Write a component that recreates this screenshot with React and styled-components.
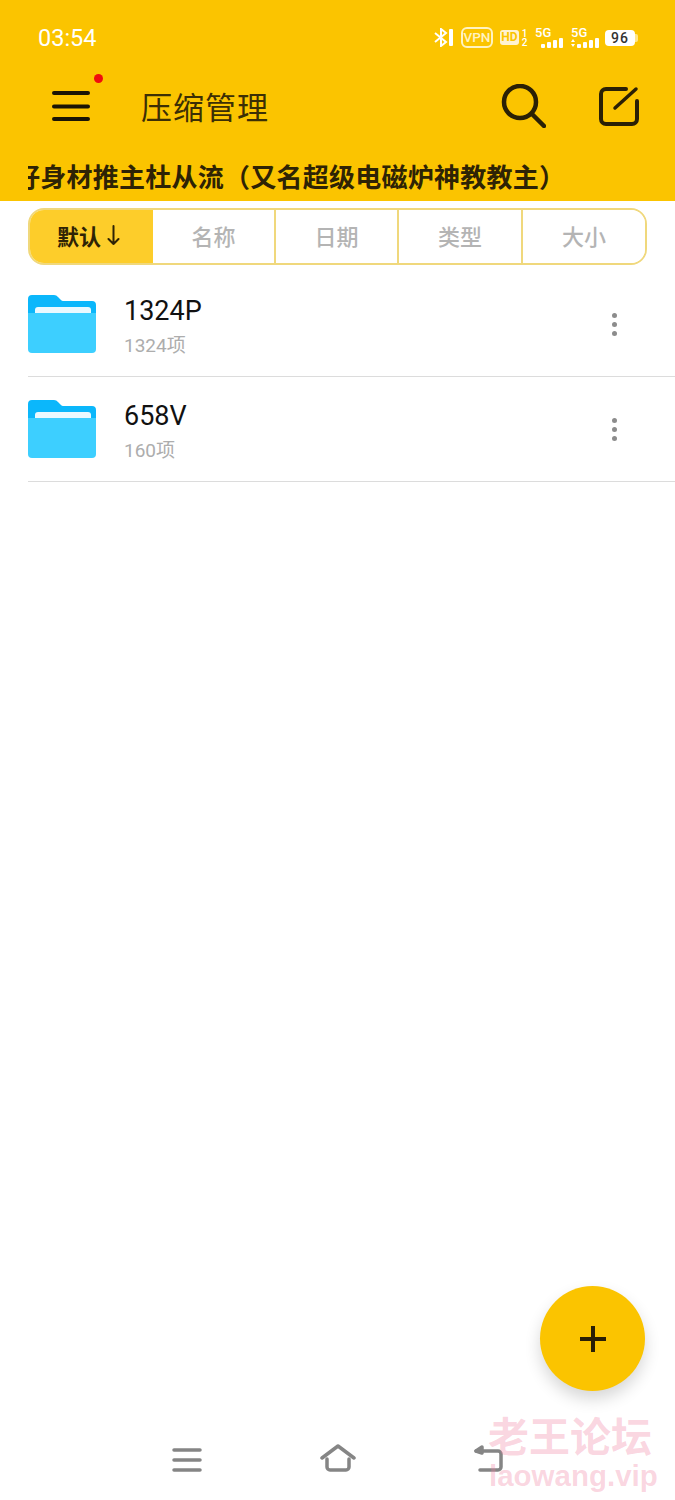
import React from "react";
import styled, { createGlobalStyle } from "styled-components";

const GlobalStyle = createGlobalStyle`
  * { box-sizing: border-box; }
  html, body { margin: 0; padding: 0; background: #fff; }
  body { font-family: "Roboto", "Noto Sans CJK SC", sans-serif; }
`;

const Page = styled.div`
  position: relative;
  width: 675px;
  height: 1500px;
  overflow: hidden;
  display: flex;
  flex-direction: column;
  background: #fff;
`;
const Header = styled.header`
  background: #fbc400;
  height: 201px;
  flex-shrink: 0;
`;
const StatusBar = styled.div`
  height: 75px;
  padding: 0 37px 0 38px;
  display: flex;
  align-items: center;
  justify-content: space-between;
`;
const Time = styled.span`
  color: #fff;
  font-size: 23.5px;
  line-height: 26px;
`;
const StatusIcons = styled.div`
  display: flex;
  align-items: center;
  color: #fff;
`;
const Vpn = styled.span`
  width: 32px;
  height: 21px;
  margin-left: 7px;
  border: 2px solid #fff3c0;
  border-radius: 6px;
  font-size: 13.5px;
  font-weight: 500;
  line-height: 17px;
  text-align: center;
  color: #fff3c0;
`;
const Hd = styled.span`
  width: 19px;
  height: 15px;
  margin-left: 7px;
  border-radius: 3px;
  background: #fff3d0;
  color: #fbc400;
  font-size: 12px;
  font-weight: 700;
  line-height: 15px;
  text-align: center;
`;
const SimNums = styled.span`
  width: 7px;
  margin: 0 0 0 2px;
  font-size: 10px;
  font-weight: 500;
  line-height: 9px;
  text-align: center;
`;
const Signal = styled.div`
  position: relative;
  width: 28px;
  height: 20px;
  margin-left: ${p => p.$gap}px;
`;
const SignalLabel = styled.span`
  position: absolute;
  left: 0;
  top: -2px;
  font-size: 13px;
  line-height: 13px;
  font-weight: 500;
`;
const Battery = styled.span`
  width: 30px;
  height: 16px;
  margin-left: 6px;
  border-radius: 4px;
  background: #fff;
  color: #333;
  font-size: 14px;
  font-weight: 500;
  letter-spacing: 1px;
  line-height: 16px;
  text-align: center;
`;
const BatteryCap = styled.span`
  width: 3px;
  height: 8px;
  border-radius: 0 2px 2px 0;
  background: #ffe68a;
`;
const Toolbar = styled.div`
  height: 62px;
  padding: 0 36px 0 52px;
  display: flex;
  align-items: center;
`;
const MenuButton = styled.div`
  position: relative;
  width: 38px;
  height: 30px;
`;
const RedDot = styled.span`
  position: absolute;
  left: 42px;
  top: -17px;
  width: 9px;
  height: 9px;
  border-radius: 50%;
  background: #f00d0d;
`;
const Title = styled.h1`
  flex: 1;
  margin: 0 0 0 51px;
  color: #3c2f05;
  font-size: 31px;
  font-weight: 400;
  line-height: 40px;
  letter-spacing: 1px;
  font-family: "Noto Sans CJK SC", sans-serif;
`;
const Actions = styled.div`
  display: flex;
  align-items: center;
  gap: 52px;
`;
const Marquee = styled.div`
  margin: 22px 0 0 28px;
  width: 620px;
  height: 36px;
  overflow: hidden;
`;
const MarqueeText = styled.div`
  margin-left: -14px;
  color: #2e2305;
  font-family: "Noto Sans CJK SC", sans-serif;
  font-size: 26px;
  font-weight: 700;
  line-height: 34px;
  letter-spacing: 0.25px;
  white-space: nowrap;
`;
const Tabs = styled.div`
  margin: 7px 28px 0;
  height: 57px;
  display: grid;
  grid-template-columns: 123px 121px 123px 124px 1fr;
  border: 2px solid #f0d87c;
  border-radius: 16px;
  overflow: hidden;
`;
const Tab = styled.div`
  display: flex;
  align-items: center;
  justify-content: center;
  gap: 6px;
  padding: 0 ${p => (p.$active ? "6px" : "0")} 3px 0;
  border-left: ${p => (p.$plain ? "none" : "2px solid #f0d87c")};
  background: ${p => (p.$active ? "#fdcd2a" : "#fff")};
  color: ${p => (p.$active ? "#2e2305" : "#b4b4b4")};
  font-family: "Noto Sans CJK SC", sans-serif;
  font-size: 22px;
  font-weight: ${p => (p.$active ? 700 : 500)};
`;
const List = styled.div`
  margin-top: 7px;
  padding-left: 28px;
`;
const Row = styled.div`
  height: 105px;
  display: flex;
  align-items: center;
  border-bottom: 1.5px solid #dcdcdc;
`;
const RowText = styled.div`
  flex: 1;
  margin-left: 28px;
  padding-top: 4px;
  display: flex;
  flex-direction: column;
`;
const RowName = styled.div`
  color: #111;
  font-size: 27px;
  line-height: 32px;
`;
const RowCount = styled.div`
  margin-top: 7px;
  color: #adadad;
  font-size: 19px;
  line-height: 24px;
`;
const More = styled.div`
  width: 5px;
  margin-right: 58px;
  display: flex;
  flex-direction: column;
  gap: 4px;
  span {
    width: 5px;
    height: 5px;
    border-radius: 50%;
    background: #8c8c8c;
  }
`;
const Spacer = styled.div`
  flex: 1;
`;
const NavBar = styled.nav`
  height: 80px;
  padding: 0 172px 28px;
  display: flex;
  align-items: flex-end;
  justify-content: space-between;
`;
const Fab = styled.div`
  position: absolute;
  left: 540px;
  top: 1286px;
  width: 105px;
  height: 105px;
  border-radius: 50%;
  background: #fbc400;
  box-shadow: 0 8px 16px rgba(0, 0, 0, 0.16);
  display: flex;
  align-items: center;
  justify-content: center;
`;
const Watermark = styled.div`
  position: absolute;
  left: 484px;
  top: 1412px;
  width: 172px;
  color: rgba(240, 130, 160, 0.33);
  font-weight: 700;
  text-align: center;
  pointer-events: none;
`;
const WatermarkCn = styled.div`
  font-family: "Noto Sans CJK SC", sans-serif;
  font-size: 41px;
  line-height: 44px;
`;
const WatermarkEn = styled.div`
  margin: 3px 0 0 5px;
  font-family: "Liberation Sans", sans-serif;
  font-size: 29.5px;
  line-height: 34px;
  white-space: nowrap;
`;

const Folder = () => (
  <svg width="68" height="58" viewBox="0 0 68 58">
    <path d="M0 4a4 4 0 0 1 4-4h22a5 5 0 0 1 4 2l3 3a3 3 0 0 0 2 1h29a4 4 0 0 1 4 4v40H0z" fill="#0bb7fb" />
    <rect x="7" y="12" width="56" height="12" rx="3" fill="#eaf9ff" />
    <path d="M0 18h68v36a4 4 0 0 1-4 4H4a4 4 0 0 1-4-4z" fill="#3dcfff" />
  </svg>
);

const rows = [
  { name: "1324P", count: "1324项" },
  { name: "658V", count: "160项" },
];
const tabs = ["名称", "日期", "类型", "大小"];

const SignalBars = ({ arrows }) => (
  <svg width="28" height="10" viewBox="0 0 28 10" style={{ position: "absolute", right: 0, bottom: 0 }} fill="#fff">
    {arrows && <path d="M0 4l2-3 2 3zM0 6l2 3 2-3z" />}
    <rect x="6" y="6" width="4" height="4" rx="1" />
    <rect x="12" y="4" width="4" height="6" rx="1" />
    <rect x="18" y="2" width="4" height="8" rx="1" />
    <rect x="24" y="0" width="4" height="10" rx="1" />
  </svg>
);

export default function App() {
  return (
    <Page>
      <GlobalStyle />
      <Header>
        <StatusBar>
          <Time>03:54</Time>
          <StatusIcons>
            <svg width="20" height="19" viewBox="0 0 20 19" fill="none" stroke="#fff" strokeWidth="2">
              <path d="M1 5l11 9-5 4V1l5 4-11 9" />
              <rect x="15" y="1" width="4" height="17" rx="1" fill="#fff" stroke="none" />
            </svg>
            <Vpn>VPN</Vpn>
            <Hd>HD</Hd>
            <SimNums>1<br />2</SimNums>
            <Signal $gap={7}>
              <SignalLabel>5G</SignalLabel>
              <SignalBars />
            </Signal>
            <Signal $gap={8}>
              <SignalLabel>5G</SignalLabel>
              <SignalBars arrows />
            </Signal>
            <Battery>96</Battery>
            <BatteryCap />
          </StatusIcons>
        </StatusBar>
        <Toolbar>
          <MenuButton>
            <svg width="38" height="30" viewBox="0 0 38 30" stroke="#1a1405" strokeWidth="4" strokeLinecap="round">
              <path d="M2 2h34M2 15.5h34M2 28h34" />
            </svg>
            <RedDot />
          </MenuButton>
          <Title>压缩管理</Title>
          <Actions>
            <svg width="45" height="44" viewBox="0 0 45 44" fill="none" stroke="#2a2005" strokeWidth="4.5" strokeLinecap="round">
              <circle cx="19" cy="18" r="16" />
              <path d="M31 30l12 12" />
            </svg>
            <svg width="41" height="40" viewBox="0 0 41 40" fill="none" stroke="#2a2005" strokeWidth="4" strokeLinecap="round">
              <path d="M28 3H8a5 5 0 0 0-5 5v25a5 5 0 0 0 5 5h26a5 5 0 0 0 5-5V15" />
              <path d="M17 22L38 3" strokeWidth="3.5" />
            </svg>
          </Actions>
        </Toolbar>
        <Marquee>
          <MarqueeText>好身材推主杜从流（又名超级电磁炉神教教主）</MarqueeText>
        </Marquee>
      </Header>
      <Tabs>
        <Tab $active $plain>
          默认
          <svg width="13" height="20" viewBox="0 0 13 20" fill="none" stroke="#2e2305" strokeWidth="2" strokeLinecap="round" strokeLinejoin="round">
            <path d="M6.5 1v18M1.5 14l5 5 5-5" />
          </svg>
        </Tab>
        {tabs.map((t, i) => (
          <Tab key={t} $plain={i === 0}>{t}</Tab>
        ))}
      </Tabs>
      <List>
        {rows.map(r => (
          <Row key={r.name}>
            <Folder />
            <RowText>
              <RowName>{r.name}</RowName>
              <RowCount>{r.count}</RowCount>
            </RowText>
            <More>
              <span />
              <span />
              <span />
            </More>
          </Row>
        ))}
      </List>
      <Spacer />
      <NavBar>
        <svg width="30" height="24" viewBox="0 0 30 24" stroke="#858585" strokeWidth="3.5" strokeLinecap="round">
          <path d="M2 2h26M2 12h26M2 22h26" />
        </svg>
        <svg width="36" height="28" viewBox="0 0 36 28" fill="none" stroke="#858585" strokeWidth="3.5" strokeLinecap="round" strokeLinejoin="round">
          <path d="M2 14L18 2l16 12" />
          <path d="M7 15v8a3 3 0 0 0 3 3h16a3 3 0 0 0 3-3v-8" />
        </svg>
        <svg width="30" height="28" viewBox="0 0 30 28" fill="none" stroke="#858585" strokeWidth="3.5" strokeLinecap="round" strokeLinejoin="round">
          <path d="M3 7h22a3 3 0 0 1 3 3v13a3 3 0 0 1-3 3H7" />
          <path d="M9 3L3 7l6 2z" fill="#858585" />
        </svg>
      </NavBar>
      <Fab>
        <svg width="28" height="28" viewBox="0 0 28 28" stroke="#2a1f05" strokeWidth="4">
          <path d="M14 1v26M1 14h26" />
        </svg>
      </Fab>
      <Watermark>
        <WatermarkCn>老王论坛</WatermarkCn>
        <WatermarkEn>laowang.vip</WatermarkEn>
      </Watermark>
    </Page>
  );
}
